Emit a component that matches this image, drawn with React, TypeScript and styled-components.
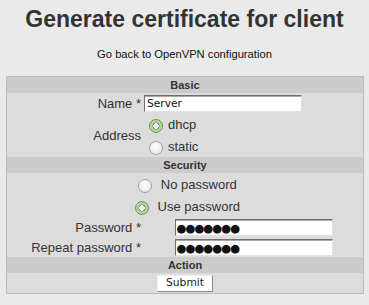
import styled, { createGlobalStyle } from 'styled-components';

const GlobalStyle = createGlobalStyle`
  body {
    margin: 0;
    background: #eaeaea;
    font-family: "Liberation Sans", Arial, sans-serif;
    color: #333;
  }
`;

const Page = styled.div`
  width: 369px;
`;

const Title = styled.h1`
  margin: 6px 0 0;
  font-size: 23px;
  line-height: 26px;
  font-weight: 700;
  text-align: center;
  color: #333;
`;

const BackLink = styled.a`
  display: block;
  margin-top: 16px;
  font-size: 11.2px;
  line-height: 13px;
  text-align: center;
  color: #111;
  text-decoration: none;
`;

const Form = styled.form`
  box-sizing: border-box;
  width: 358px;
  margin: 15px 0 0 6px;
  border: 1px solid #bcbcbc;
  background: #dcdcdc;
`;

const SectionHead = styled.div`
  height: 16px;
  line-height: 16px;
  background: #cccccc;
  font-size: 11px;
  font-weight: 700;
  text-align: center;
  color: #333;
`;

const FieldRow = styled.div<{ $h: number; $center?: boolean }>`
  display: grid;
  grid-template-columns: 137px 1fr;
  align-items: center;
  height: ${(p) => p.$h}px;
  justify-items: ${(p) => (p.$center ? 'center' : 'start')};
`;

const Label = styled.label`
  justify-self: stretch;
  padding-right: 3px;
  text-align: right;
  font-size: 13px;
  color: #333;
`;

const TextInput = styled.input`
  box-sizing: border-box;
  width: 158px;
  height: 17px;
  margin: 0;
  padding: 0 2px;
  border: 1px solid;
  border-color: #707070 #e2e2e2 #e2e2e2 #707070;
  box-shadow: inset 0 1px 0 #a8a8a8;
  background: #fff;
  font-family: "DejaVu Sans", Verdana, sans-serif;
  font-size: 10.67px;
  color: #111;
  outline: none;
`;

const SecretInput = styled(TextInput)`
  padding-left: 1px;
  font-size: 11.4px;
  letter-spacing: -1px;
`;

const RadioStack = styled.div`
  display: flex;
  flex-direction: column;
`;

const ChoiceLine = styled.label<{ $h: number; $center?: boolean }>`
  display: flex;
  align-items: center;
  justify-content: ${(p) => (p.$center ? 'center' : 'flex-start')};
  height: ${(p) => p.$h}px;
  font-size: 13px;
  color: #333;
`;

const Radio = styled.input.attrs({ type: 'radio' })`
  appearance: none;
  box-sizing: border-box;
  width: 14px;
  height: 14px;
  margin: 3px 3px 0 5px;
  border-radius: 50%;
  border: 1px solid #a2a2a2;
  background: radial-gradient(circle at 45% 40%, #ffffff 0, #f2f2f2 45%, #dcdcdc 100%);

  &:checked {
    border-color: #6f9650;
    background: radial-gradient(
      circle at center,
      #e4e4e4 0 1.5px,
      #ffffff 1.7px 2.6px,
      #8a8a8a 2.8px 3.5px,
      #b3d696 3.7px 100%
    );
  }
`;

const ChoiceText = styled.span`
  margin-left: 2px;
`;

const FullRow = styled.div<{ $h: number }>`
  display: flex;
  align-items: center;
  justify-content: center;
  height: ${(p) => p.$h}px;
`;

const SubmitButton = styled.button`
  box-sizing: border-box;
  width: 56px;
  height: 17px;
  margin: 0;
  padding: 0;
  border: 1px solid;
  border-color: #f2f2f2 #8a8a8a #8a8a8a #f2f2f2;
  background: #fff;
  font-family: "DejaVu Sans", Verdana, sans-serif;
  font-size: 10.67px;
  line-height: 14px;
  color: #222;
`;

export default function App() {
  return (
    <Page>
      <GlobalStyle />
      <Title>Generate certificate for client</Title>
      <BackLink href="#">Go back to OpenVPN configuration</BackLink>
      <Form onSubmit={(e) => e.preventDefault()}>
        <SectionHead>Basic</SectionHead>
        <FieldRow $h={20}>
          <Label htmlFor="name">Name *</Label>
          <TextInput id="name" defaultValue="Server" />
        </FieldRow>
        <FieldRow $h={44}>
          <Label>Address</Label>
          <RadioStack>
            <ChoiceLine $h={22}>
              <Radio name="address" defaultChecked />
              <ChoiceText>dhcp</ChoiceText>
            </ChoiceLine>
            <ChoiceLine $h={22}>
              <Radio name="address" />
              <ChoiceText>static</ChoiceText>
            </ChoiceLine>
          </RadioStack>
        </FieldRow>

        <SectionHead>Security</SectionHead>
        <ChoiceLine $h={22} $center>
          <Radio name="security" />
          <ChoiceText>&nbsp;No password</ChoiceText>
        </ChoiceLine>
        <ChoiceLine $h={22} $center>
          <Radio name="security" defaultChecked />
          <ChoiceText>&nbsp;Use password</ChoiceText>
        </ChoiceLine>
        <FieldRow $h={21} $center>
          <Label htmlFor="pw">Password *</Label>
          <SecretInput id="pw" defaultValue="●●●●●●●" />
        </FieldRow>
        <FieldRow $h={19} $center>
          <Label htmlFor="pw2">Repeat password *</Label>
          <SecretInput id="pw2" defaultValue="●●●●●●●" />
        </FieldRow>

        <SectionHead>Action</SectionHead>
        <FullRow $h={20}>
          <SubmitButton type="submit">Submit</SubmitButton>
        </FullRow>
      </Form>
    </Page>
  );
}
